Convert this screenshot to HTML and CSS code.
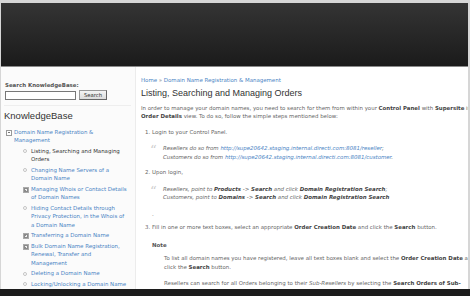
FILE: index.html
```html
<!DOCTYPE html>
<html>
<head>
  <title>KnowledgeBase - Listing, Searching and Managing Orders</title>
  <link rel="stylesheet" href="styles.css">
</head>
<body>
  <div class="page">
    <div class="header"></div>

    <div class="wrap">
      <div class="sidebar">
        <form class="search">
          <label for="kb-q">Search KnowledgeBase:</label>
          <div class="search-row">
            <input type="text" id="kb-q">
            <button type="button">Search</button>
          </div>
        </form>

        <h2>KnowledgeBase</h2>
        <ul class="tree">
          <li class="node open"><a href="#">Domain Name Registration &amp; Management</a>
            <ul>
              <li class="leaf"><span class="current">Listing, Searching and Managing Orders</span></li>
              <li class="leaf"><a href="#">Changing Name Servers of a Domain Name</a></li>
              <li class="node"><a href="#">Managing Whois or Contact Details of Domain Names</a></li>
              <li class="leaf"><a href="#">Hiding Contact Details through Privacy Protection, in the Whois of a Domain Name</a></li>
              <li class="node"><a href="#">Transferring a Domain Name</a></li>
              <li class="node"><a href="#">Bulk Domain Name Registration, Renewal, Transfer and Management</a></li>
              <li class="leaf"><a href="#">Deleting a Domain Name</a></li>
              <li class="leaf"><a href="#">Locking/Unlocking a Domain Name</a></li>
              <li class="leaf"><a href="#">Suspending/Unsuspending a Domain Name</a></li>
            </ul>
          </li>
        </ul>
      </div>

      <div class="main">
        <div class="article">
          <div class="crumbs"><a href="#">Home</a> &raquo; <a href="#">Domain Name Registration &amp; Management</a></div>
          <h1>Listing, Searching and Managing Orders</h1>
          <p>In order to manage your domain names, you need to search for them from within your <b>Control Panel</b> with <b>Supersite</b> in the <b>Order Details</b> view. To do so, follow the simple steps mentioned below:</p>

          <ol>
            <li>Login to your Control Panel.
              <blockquote>
                Resellers do so from <a href="#">http://supe20642.staging.internal.directi.com:8081/reseller</a>;<br>
                Customers do so from <a href="#">http://supe20642.staging.internal.directi.com:8081/customer</a>.
              </blockquote>
            </li>
            <li>Upon login,
              <blockquote>
                Resellers, point to <b>Products</b> -&gt; <b>Search</b> and click <b>Domain Registration Search</b>;<br>
                Customers, point to <b>Domains</b> -&gt; <b>Search</b> and click <b>Domain Registration Search</b>
              </blockquote>
              <p class="dot">.</p>
            </li>
            <li>Fill in one or more text boxes, select an appropriate <b>Order Creation Date</b> and click the <b>Search</b> button.
              <div class="note">
                <h4>Note</h4>
                <p>To list all domain names you have registered, leave all text boxes blank and select the <b>Order Creation Date</b> and click the <b>Search</b> button.</p>
                <p>Resellers can search for all Orders belonging to their <i>Sub-Resellers</i> by selecting the <b>Search Orders of Sub-Resellers</b> check box.</p>
              </div>
            </li>
          </ol>
        </div>
      </div>
    </div>
  </div>
  <div class="footer"></div>
</body>
</html>
```

FILE: styles.css
```css
html, body {
  margin: 0;
  height: 296px;
  overflow: hidden;
}
body {
  background-color: #d6d6d6;
  font-family: "DejaVu Sans", Verdana, sans-serif;
  font-size: 5.45px;
  line-height: 8.5px;
  color: #666;
  display: flex;
  flex-direction: column;
}
a {
  color: #4a84c4;
  text-decoration: none;
}
b {
  color: #444;
}

.page {
  flex: 1;
  min-height: 0;
  margin: 3px 2px 0 1px;
  background-color: white;
  display: flex;
  flex-direction: column;
}
.header {
  height: 63px;
  flex-shrink: 0;
  background: linear-gradient(#343434, #1b1b1b);
  border-bottom: 1px solid #8a8a8a;
}
.footer {
  height: 7px;
  flex-shrink: 0;
  background-color: #1c1c1c;
}

.wrap {
  flex: 1;
  min-height: 0;
  display: flex;
  overflow: hidden;
}

/* colonne de gauche */
.sidebar {
  width: 130px;
  flex-shrink: 0;
  padding: 14px 0 0 4px;
  background-color: #fbfbfb;
  border-right: 1px solid #ececec;
}
.search label {
  display: block;
  font-weight: bold;
  color: #555;
}
.search-row {
  display: flex;
  gap: 3px;
  margin-top: 1px;
}
.search input {
  width: 69px;
  height: 7px;
  padding: 0;
  margin: 0;
  border: 1px solid #777;
  background: white;
}
.search button {
  width: 28px;
  height: 10px;
  padding: 0;
  margin-top: -1px;
  font-family: "DejaVu Sans", Verdana, sans-serif;
  font-size: 5.3px;
  color: #333;
  background: linear-gradient(#f4f4f4, #dcdcdc);
  border: 1px solid #999;
  border-right-color: #666;
  border-bottom-color: #666;
}
.sidebar h2 {
  font-family: "Liberation Sans", Arial, sans-serif;
  font-weight: normal;
  font-size: 9.5px;
  line-height: 12px;
  color: #333;
  margin: 5px 0 0 -1px;
  padding-top: 4px;
  border-top: 1px solid #eee;
  width: 127px;
}

.tree, .tree ul {
  list-style: none;
  margin: 0;
  padding: 0;
}
.tree {
  margin-top: 6px;
  width: 122px;
}
.tree li {
  position: relative;
  padding-left: 9px;
}
.tree ul {
  margin-top: 2px;
  padding-left: 9px;
  width: 104px;
}
.tree ul li {
  margin-bottom: 2px;
  padding-left: 8px;
}
.tree li::before {
  content: "";
  position: absolute;
  left: 1px;
  top: 2px;
  width: 4px;
  height: 4px;
  border: 1px solid #999;
  background: white linear-gradient(#777, #777) center / 2px 1px no-repeat;
}
.tree ul .node::before {
  left: 0;
  background:
    linear-gradient(#eee, #eee) center / 2px 1px no-repeat,
    linear-gradient(#eee, #eee) center / 1px 2px no-repeat,
    #8a8a8a;
  border-color: #aaa;
}
.tree ul .leaf::before {
  left: 0;
  top: 2.5px;
  width: 2px;
  height: 2px;
  border-radius: 50%;
  border-color: #c4c4c4;
  background: white;
}
.current {
  color: #333;
}

/* contenu */
.main {
  flex: 1;
  min-width: 0;
  overflow: hidden;
  padding: 9px 0 0 5px;
}
.article {
  width: 347px;
}
.crumbs {
  color: #888;
}
h1 {
  font-family: "Liberation Sans", Arial, sans-serif;
  font-weight: normal;
  font-size: 9px;
  line-height: 12px;
  color: #333;
  margin: 2px 0 5px 0;
}
p {
  margin: 0;
}
ol {
  margin: 7px 0 0 0;
  padding-left: 11px;
}
ol li {
  margin-bottom: 5px;
  padding-left: 0;
}
blockquote {
  position: relative;
  margin: 8px 0 7px 11px;
  font-style: italic;
}
blockquote::before {
  content: "\201C";
  position: absolute;
  left: -13px;
  top: 0;
  font-family: "DejaVu Serif", serif;
  font-size: 13px;
  line-height: 13px;
  color: #ccc;
  font-style: normal;
}
.dot {
  margin-top: 8px;
}
.note {
  margin: 9px 0 0 0;
}
.note h4 {
  margin: 0 0 5px 0;
  font-size: 5.45px;
  font-weight: bold;
  color: #555;
}
.note p {
  margin: 0 0 8px 12px;
}
```
